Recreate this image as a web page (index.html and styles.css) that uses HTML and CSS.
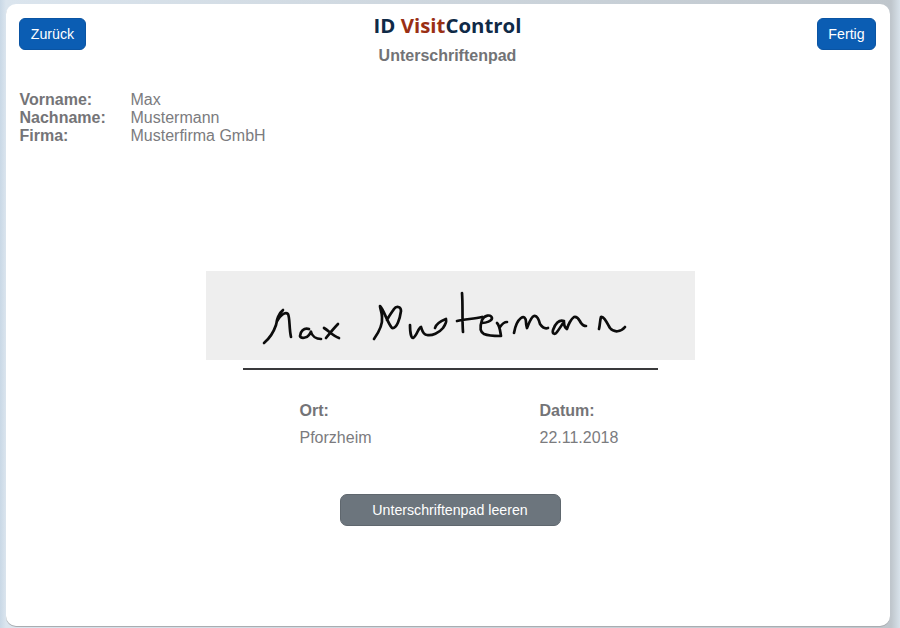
FILE: index.html
```html
<!DOCTYPE html>
<html lang="de">
<head>
<meta charset="utf-8">
<title>Unterschriftenpad</title>
<link rel="stylesheet" href="styles.css">
</head>
<body>
<main class="card">
  <header class="top">
    <button class="btn btn-blue btn-back">Zurück</button>
    <div class="brand">
      <div class="logo">ID <span class="logo-red">Visit</span>Control</div>
      <h1 class="title">Unterschriftenpad</h1>
    </div>
    <button class="btn btn-blue btn-done">Fertig</button>
  </header>
  <dl class="person">
    <dt>Vorname:</dt><dd>Max</dd>
    <dt>Nachname:</dt><dd>Mustermann</dd>
    <dt>Firma:</dt><dd>Musterfirma GmbH</dd>
  </dl>
  <section class="sign">
    <div class="pad">
      <svg class="ink" viewBox="207 271 489 89" width="489" height="89" aria-hidden="true">
        <g fill="none" stroke="#0c0c0c" stroke-width="2.7" stroke-linecap="round" stroke-linejoin="round">
          <path d="M265 343C271 338 275 331 277 325C278 319 280 313 284 310C283 312 279 315 278 320"/>
          <path d="M278 321C281 316 286 311 289 314C291 318 290 328 292 337"/>
          <path d="M310 329C305 327 301 332 301 336C302 339 308 338 310 335C312 332 312 331 312 332C313 336 317 339 322 339"/>
          <path d="M325 328C330 331 334 336 340 338M339 324C335 328 331 333 327 338"/>
          <path d="M375 339C380 332 384 325 383 317C383 312 381 309 381 306C385 310 388 322 393 328C398 329 401 318 402 311C402 306 397 306 395 309C393 312 390 316 388 320"/>
          <path d="M411 325C411 331 412 338 414 338C418 336 419 328 422 327C423 330 424 335 428 335C433 336 440 333 444 328C446 325 448 322 447 320"/>
          <path d="M447 319C442 321 437 324 436 328"/>
          <path d="M463 293C464 305 463 320 464 332M458 321C466 319 475 319 483 317"/>
          <path d="M483 323C487 323 493 321 493 318C492 314 485 315 483 320C481 326 481 332 485 334C490 336 497 336 501 336"/>
          <path d="M498 323C501 326 501 331 502 336M501 327C503 324 505 322 508 322"/>
          <path d="M515 333C516 327 518 321 522 318C525 316 527 318 527 322C527 325 528 328 528 328C530 323 532 317 535 316C538 315 540 320 541 324C543 327 546 329 549 328"/>
          <path d="M565 321C560 319 556 324 554 330C553 334 556 335 558 332C561 328 564 323 565 322C565 325 566 328 568 329C569 325 572 319 575 317C579 316 580 320 582 323C584 326 586 326 587 326"/>
          <path d="M600 329C601 325 601 320 602 317C605 316 608 323 611 328C615 333 622 332 626 327"/>
        </g>
      </svg>
    </div>
    <div class="rule"></div>
    <div class="place">
      <div class="place-col"><strong>Ort:</strong><span>Pforzheim</span></div>
      <div class="place-col"><strong>Datum:</strong><span>22.11.2018</span></div>
    </div>
    <button class="btn btn-gray">Unterschriftenpad leeren</button>
  </section>
</main>
</body>
</html>
```
FILE: styles.css
```css
* { box-sizing: border-box; }
html, body { margin: 0; height: 100%; }
body {
  width: 900px;
  height: 628px;
  overflow: hidden;
  padding: 4px 10px 2px 6px;
  background: linear-gradient(90deg, #c9d8e6 0, #dbe5ee 6px, #bfc6cc 891px, #d8e2ea 900px);
  font-family: "Liberation Sans", Arial, sans-serif;
  color: #7a7a7d;
}
.card {
  height: 100%;
  background: #fff;
  border-radius: 10px;
  box-shadow: 0 1px 0 #a9adb1;
  padding: 14px 14px 0 13px;
  display: flex;
  flex-direction: column;
}
.top {
  display: flex;
  justify-content: space-between;
  align-items: flex-start;
  height: 73px;
  position: relative;
}
.btn {
  font-family: inherit;
  font-size: 14.2px;
  color: #fff;
  border-radius: 6px;
  height: 32px;
  padding: 0;
}
.btn-blue {
  background: #0b5db3;
  border: 1px solid #0a54a3;
}
.btn-back { width: 67px; }
.btn-done { width: 59px; }
.brand {
  position: absolute;
  left: 0;
  right: 0;
  top: -6px;
  text-align: center;
}
.logo {
  font-family: "Open Sans", sans-serif;
  font-weight: 700;
  font-size: 20.4px;
  line-height: 26px;
  color: #0f2a47;
}
.logo-red { color: #9a2f14; }
.title {
  margin: 8px 0 0;
  font-size: 16px;
  line-height: 20px;
  font-weight: 700;
  color: #727376;
}
.person {
  margin: 0;
  padding-left: 0.5px;
  display: grid;
  grid-template-columns: 111px 1fr;
  font-size: 16px;
  line-height: 18px;
}
.person dt { font-weight: 700; color: #747477; }
.person dd { margin: 0; color: #7b7b7e; }
.sign {
  margin-top: 126px;
  display: flex;
  flex-direction: column;
  align-items: center;
}
.pad {
  width: 489px;
  height: 89px;
  background: #eee;
  margin-left: 6px;
}
.ink { display: block; }
.rule {
  width: 415px;
  height: 2px;
  margin-top: 8px;
  margin-left: 6px;
  background: #3a3a3c;
}
.place {
  width: 321px;
  margin: 32px 0 0 25px;
  display: grid;
  grid-template-columns: 240px 81px;
  font-size: 16px;
}
.place-col { display: flex; flex-direction: column; gap: 9px; line-height: 18px; }
.place-col strong { color: #747477; }
.place-col span { color: #7b7b7e; }
.btn-gray {
  width: 221px;
  margin-top: 47px;
  margin-left: 5px;
  background: #6c757d;
  border: 1px solid #5f676e;
  border-radius: 7px;
}
```
